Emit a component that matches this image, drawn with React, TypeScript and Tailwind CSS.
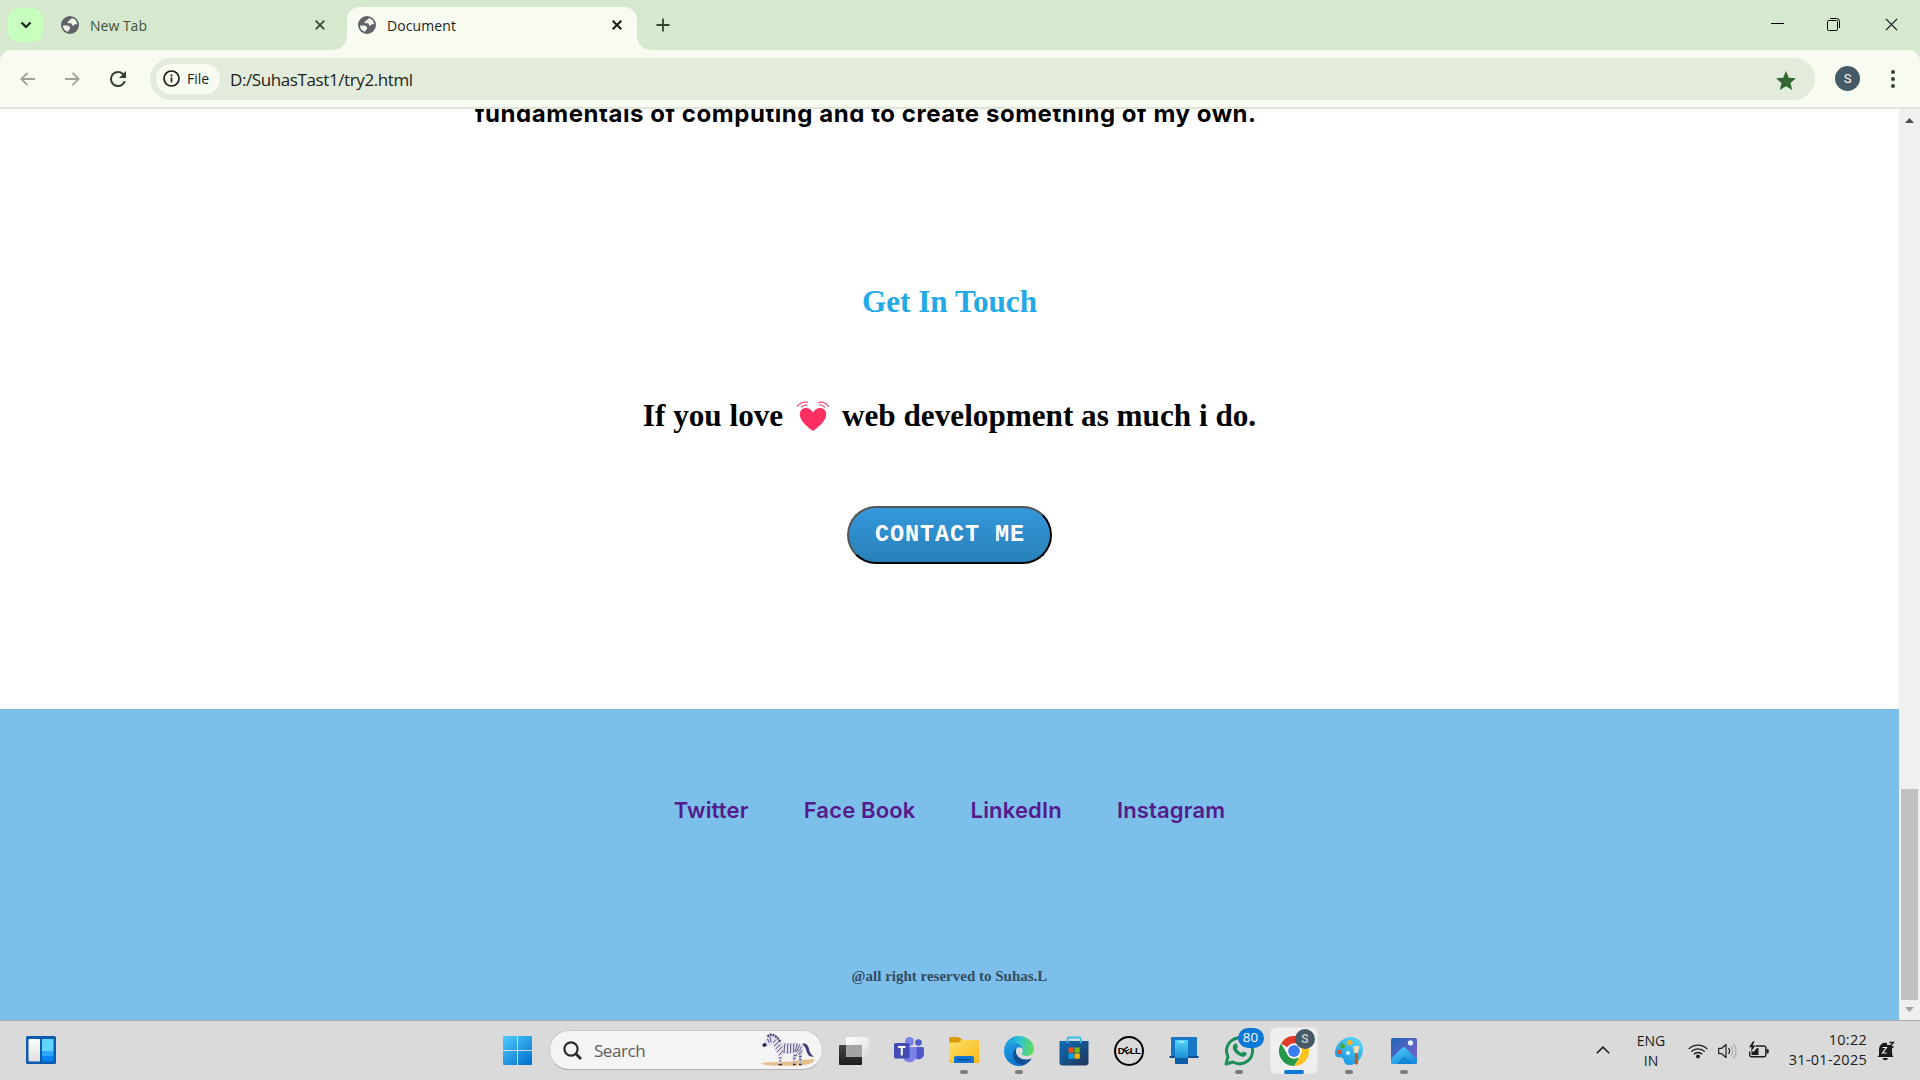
import type { ReactNode } from "react";

const ui = "font-['Open_Sans','Noto_Sans',sans-serif]";

function Globe() {
  return (
    <svg width="18" height="18" viewBox="0 0 18 18" className="shrink-0">
      <circle cx="9" cy="9" r="9" fill="#5f6368" />
      <path
        d="M10.5 2c.1 1-.6 1.7-1.6 1.8-.8.1-.8 1.5-1.5 1.700-.8.200-1.100.500-1 1.100.1.700.700.700 1.300.700h1.700c1.100 0 1.500.600 1.500 1.300.1.900.400 1.100 1.100 1.100 1 0 .900-.800 1.500-1.200.700-.400 1.700-.200 2.700-.300a7.300 7.300 0 0 0-5.700-6.200Z"
        fill="#eff4e9"
      />
      <path d="M1.900 9.500c2.200-.1 4-.1 5.300.3 1.600.5 1.900 1.600 1.900 2.600 0 .9-.5 1.200-1.200 1.500-.7.300-.4 1.500-.6 2A7.200 7.200 0 0 1 1.900 9.500Z" fill="#eff4e9" />
    </svg>
  );
}

function Cross({ color, size = 10, w = 1.8 }: { color: string; size?: number; w?: number }) {
  return (
    <svg width={size} height={size} viewBox="0 0 10 10" className="shrink-0">
      <path d="M.7.7l8.600 8.600M9.300.7L.7 9.300" stroke={color} strokeWidth={w} fill="none" />
    </svg>
  );
}

function TabStrip() {
  return (
    <div className="flex h-[50px] shrink-0 items-start bg-[#d6e8cd]">
      <div className="ml-2 mt-2 flex h-[34px] w-[35px] items-center justify-center rounded-[11px] bg-[#c7ffbf]">
        <svg width="12" height="8" viewBox="0 0 12 8" fill="none">
          <path d="M1.500 1.500 6 6l4.500-4.500" stroke="#10200f" strokeWidth="2.200" />
        </svg>
      </div>
      <div className="ml-[18px] flex h-[50px] w-[264px] items-center">
        <Globe />
        <span className="ml-[11px] text-[14px] text-[#43513f]">New Tab</span>
        <span className="ml-auto">
          <Cross color="#3b4a38" />
        </span>
      </div>
      <svg width="22" height="50" viewBox="0 0 22 50" className="shrink-0">
        <path d="M8 50A14 14 0 0 0 22 36V50Z" fill="#f8fbf2" />
      </svg>
      <div className="mt-[7px] flex h-[43px] w-[290px] items-center rounded-t-[13px] bg-[#f8fbf2] pb-[7px] pl-[11px] pr-[15px]">
        <Globe />
        <span className="ml-[11px] text-[14px] tracking-[0.1px] text-[#1b1f19]">Document</span>
        <span className="ml-auto">
          <Cross color="#161c14" w={2} />
        </span>
      </div>
      <svg width="14" height="50" viewBox="0 0 14 50" className="shrink-0">
        <path d="M14 50A14 14 0 0 1 0 36V50Z" fill="#f8fbf2" />
      </svg>
      <svg width="14" height="14" viewBox="0 0 14 14" className="ml-[5px] mt-[18px] shrink-0">
        <path d="M7 .5v13M.5 7h13" stroke="#36452f" strokeWidth="1.800" />
      </svg>
      <div className="ml-auto mr-[22px] mt-[18px] flex">
        <svg width="13" height="13" viewBox="0 0 13 13" className="mr-[43px]">
          <path d="M0 5.500h13" stroke="#000" />
        </svg>
        <svg width="13" height="13" viewBox="0 0 13 13" className="mr-[45px]" fill="none" stroke="#000">
          <rect x=".5" y="2.500" width="10" height="10" rx="1" />
          <path d="M3 .5h6.500a3 3 0 0 1 3 3V10" />
        </svg>
        <Cross color="#111" size={13} w={0.9} />
      </div>
    </div>
  );
}

function Toolbar() {
  return (
    <div className="h-[59px] shrink-0 bg-[#d6e8cd]">
      <div className="flex h-[59px] items-center rounded-t-[11px] border-b-2 border-[#dfe6d8] bg-[#f8fbf2] pl-[20px]">
        <svg width="15" height="14" viewBox="0 0 15 14" fill="none" stroke="#9da39a" strokeWidth="1.800">
          <path d="M15 7H1.500M7.500.8 1.300 7l6.200 6.200" />
        </svg>
        <svg width="15" height="14" viewBox="0 0 15 14" fill="none" stroke="#9da39a" strokeWidth="1.800" className="ml-[30px]">
          <path d="M0 7h13.500M7.500.8 13.700 7l-6.200 6.200" />
        </svg>
        <svg width="16" height="16" viewBox="4 4 16 16" className="ml-[30px]" fill="#33432f">
          <path d="M17.650 6.350A7.960 7.960 0 0 0 12 4a8 8 0 1 0 7.730 10h-2.080A6 6 0 1 1 12 6c1.660 0 3.140.69 4.220 1.780L13 11h7V4z" />
        </svg>
        <div className="ml-[24px] flex h-[42px] w-[1665px] items-center rounded-full bg-[#e3ebdc] pl-[6px] pr-[19px]">
          <div className="flex h-[30px] w-[64px] items-center rounded-full bg-[#f8fbf2] pl-[7px]">
            <svg width="17" height="17" viewBox="0 0 17 17" fill="none" stroke="#1b2118" strokeWidth="1.700">
              <circle cx="8.500" cy="8.500" r="7.500" />
              <path d="M8.500 7.600v4.600M8.500 4.600v1.800" />
            </svg>
            <span className="ml-[7px] text-[14px] font-medium text-[#1b1f19]">File</span>
          </div>
          <span className="ml-[10px] mt-[2px] text-[17px] leading-[24px] tracking-[-0.4px] text-[#1b1f19]">D:/SuhasTast1/try2.html</span>
          <svg width="20" height="19" viewBox="2 2 20 19" className="ml-auto mt-[3px]" fill="#32682f">
            <path d="M12 17.270 18.180 21l-1.640-7.030L22 9.240l-7.190-.61L12 2 9.190 8.630 2 9.240l5.460 4.730L5.820 21z" />
          </svg>
        </div>
        <div className="ml-[20px] flex size-[25px] items-center justify-center rounded-full bg-[#455a64] font-['Roboto',sans-serif] text-[13px] text-white">S</div>
        <div className="ml-[31px] flex flex-col gap-[3px]">
          <i className="size-1 rounded-full bg-[#33432f]" />
          <i className="size-1 rounded-full bg-[#33432f]" />
          <i className="size-1 rounded-full bg-[#33432f]" />
        </div>
      </div>
    </div>
  );
}

function BeatingHeart() {
  return (
    <svg width="34" height="32" viewBox="0 0 34 32" className="ml-[5px] mr-[12px] mt-px" fill="none">
      <path d="M17 30C13 27 3.800 20.500 3.800 13.500c0-4 2.700-6.500 6.100-6.500 3.100 0 5.600 1.800 7.100 4.600C18.500 8.800 21 7 24.100 7c3.400 0 6.100 2.500 6.100 6.500 0 7-9.200 13.500-13.200 16.500Z" fill="#ff2f62" />
      <g stroke="#f4527a" strokeWidth="1.200" strokeLinecap="round">
        <path d="M1.500 5.500C3.500 2.300 7 .6 11.500 1.300M5.500 6.200c1.500-1.900 3.500-2.500 5.200-2.300" />
        <path d="M32.500 5.500C30.500 2.300 27 .6 22.500 1.300M28.500 6.200c-1.500-1.900-3.500-2.500-5.200-2.300" />
      </g>
    </svg>
  );
}

function Page() {
  return (
    <main className="flex h-[911px] w-[1899px] flex-col overflow-hidden bg-white">
      <p className="-mt-[11px] ml-[475px] h-8 shrink-0 whitespace-nowrap font-['Inter',sans-serif] text-[24px] font-bold leading-8 tracking-[0.55px] text-black">
        fundamentals of computing and to create something of my own.
      </p>
      <h2 className="mt-[152px] text-center font-['Liberation_Serif',serif] text-[31.2px] font-bold leading-10 text-[#23a9e6]">Get In Touch</h2>
      <div className="mt-[74px] flex h-10 items-center justify-center whitespace-pre font-['Liberation_Serif',serif] text-[31.2px] font-bold leading-10 text-black">
        <span>If you love </span>
        <BeatingHeart />
        <span>web development as much i do.</span>
      </div>
      <button className="mt-[70px] h-[58px] w-[205px] shrink-0 self-center rounded-[30px] border-2 border-b-black border-l-[#555] border-r-black border-t-[#555] bg-linear-to-b from-[#3498db] to-[#2980b9] pl-px font-['Courier_New','Liberation_Mono',monospace] text-[23.500px] font-bold leading-[54px] tracking-[0.9px] text-white">
        CONTACT ME
      </button>
      <footer className="mt-[145px] flex h-[311px] shrink-0 flex-col items-center bg-[#7dbfeb] pt-[86px]">
        <nav className="flex gap-[55px] font-['Inter',sans-serif] text-[22px] font-semibold leading-[30px] tracking-[0.17px] text-[#551a8b]">
          <a>Twitter</a>
          <a>Face Book</a>
          <a>LinkedIn</a>
          <a>Instagram</a>
        </nav>
        <p className="mt-[141px] font-['Liberation_Serif',serif] text-[15px] font-bold leading-5 text-[#324c5e]">@all right reserved to Suhas.L</p>
      </footer>
    </main>
  );
}

function Scrollbar() {
  return (
    <div className="flex w-[21px] flex-col items-center bg-[#f0f0f0]">
      <svg width="9" height="5" viewBox="0 0 9 5" className="mr-px mt-[9px] shrink-0">
        <path d="M4.500 0 9 5H0z" fill="#505050" />
      </svg>
      <div className="mt-[666px] h-[211px] w-[17px] bg-[#c1c1c1]" />
      <svg width="9" height="5" viewBox="0 0 9 5" className="mr-px mt-[7px] shrink-0">
        <path d="M0 0h9L4.500 5z" fill="#a3a3a3" />
      </svg>
    </div>
  );
}

function Zebra() {
  return (
    <svg width="56" height="34" viewBox="0 0 56 34" className="ml-auto">
      <path d="M0 30.500c4-2 24-1 34-2.500 7-1 14-2 20-1.500-2 4-8 5.500-14 5.800-13 .8-35 1-40-1.800Z" fill="#e6bf8c" />
      <path d="M33 18l-1.500 6 .8 7.500h2L34.500 25l3-4 .5 10.500h2.200L41 22l1-5Z" fill="#c3bccd" />
      <path d="M1.500 11.500c.5-2.500 3-4 4-6.500C7 3.500 8 2 10.500 2.500 14 3 16 6.500 19.500 9.500c5 1.500 10-.5 16 0 5 .5 7 3 6.500 7-.5 3.500-3 4-6 4-4 1-8 1-11.500.5L21 23l-.3 8.500h-3L17.500 24C15 20 14 15 11.500 10.500c-2 1-4 3-5.500 3.300-2 .8-4.500.2-4.500-2.300Z" fill="#e4dfea" />
      <path d="M6.500 3.500C9.500 0 15 1.500 19.500 9" stroke="#43386a" strokeWidth="2.200" strokeDasharray="2 .8" fill="none" />
      <path d="M6.500 5.500l1.500 4M9 3.500l1 6M12 10l3-3.500M13 13l4.500-4M14.500 16l5-4.500M16 19l5.500-5.500M18 22.500l4-5M24 10.500c-1 3-.5 6-1 9.500M27 10.500c-.8 3-.2 6-.5 10M30 10.500c-.8 3 0 6-.5 9.500M33 10.500c-.8 3 0 5-.5 9M36 10.500c0 3-1 5-2 8M38.500 11.500c-.5 3-2 5-3.500 7.500M40.500 13.500c-1 3-2.500 4-4 6M41 17l-3 4M33 22.500h2.500M32.500 25.500h2M38 23.500h2.500M38.200 26.500h2M17.800 25h3M18 28h2.500" stroke="#53497a" strokeWidth=".95" fill="none" />
      <path d="M41 11c4-1.500 6 1.500 7 5 .8 3.500 2 6 5 7.500-4 1-6.500-1.500-7.500-5.500-.7-3.500-2-5-4.500-7Z" fill="#453970" />
      <path d="M1.500 11.500 4 9.800l2 2.200-2 1.800c-1.700.3-2.800-.8-2.500-2.300Z" fill="#2c2548" />
      <path d="M17.500 31.500h3.500M32 31.500h2.500M38 31.500h2.500" stroke="#2c2548" strokeWidth="1.500" />
    </svg>
  );
}

function TaskbarApp({ children, dot, active }: { children: ReactNode; dot?: boolean; active?: boolean }) {
  return (
    <div className="relative flex h-full w-[55px] items-center justify-center">
      {active && <div className="absolute inset-x-[3.500px] bottom-[6px] top-[6px] rounded-md border border-[#e6e6e6] bg-[#efefef]" />}
      <div className="relative flex items-center justify-center">{children}</div>
      {dot && <div className="absolute bottom-[6px] h-1 w-2 rounded-full bg-[#7b7b7b]" />}
      {active && <div className="absolute bottom-[6px] h-1 w-5 rounded-full bg-[#0a78d7]" />}
    </div>
  );
}

function Taskbar() {
  return (
    <div className="flex h-[60px] shrink-0 items-start border-t border-[#a9a9a9] bg-[#dadada]">
      <svg width="30" height="28" viewBox="0 0 30 28" className="ml-[26px] mt-[15px]">
        <defs>
          <linearGradient id="wp" x1="0" y1="0" x2="0" y2="1">
            <stop stopColor="#fff" />
            <stop offset="1" stopColor="#dedede" />
          </linearGradient>
        </defs>
        <rect width="30" height="28" rx="1.500" fill="#0d5cae" />
        <rect x="2.500" y="3" width="11.500" height="22.500" rx="1" fill="url(#wp)" />
        <rect x="16" y="3" width="11.500" height="12" fill="#5fd4ff" />
        <rect x="16" y="15" width="11.500" height="5" fill="#2aa8fb" />
        <rect x="16" y="20" width="11.500" height="5.500" fill="#0a84ee" />
      </svg>
      <svg width="29" height="29" viewBox="0 0 29 29" className="ml-[447px] mt-[15px]">
        <defs>
          <linearGradient id="win" gradientUnits="userSpaceOnUse" x1="2" y1="0" x2="26" y2="29">
            <stop stopColor="#4ccbfb" />
            <stop offset="1" stopColor="#0470cd" />
          </linearGradient>
        </defs>
        <path d="M1 0h13v14H0V1a1 1 0 0 1 1-1ZM15 0h13a1 1 0 0 1 1 1v13H15ZM0 15h14v14H1a1 1 0 0 1-1-1ZM15 15h14v13a1 1 0 0 1-1 1H15Z" fill="url(#win)" />
      </svg>
      <div className="ml-[17px] mt-[9px] flex h-[40px] w-[274px] items-center rounded-full border border-[#c9c9c9] border-b-[#b2b2b2] bg-[#f4f4f4] pl-[13px] pr-[5px]">
        <svg width="19" height="19" viewBox="0 0 19 19" fill="none" stroke="#2b2b2b" strokeWidth="2.200">
          <circle cx="8" cy="8" r="6.600" />
          <path d="m12.800 12.800 5.200 5.200" strokeWidth="2.800" />
        </svg>
        <span className="ml-[12px] mt-px text-[17px] leading-[24px] tracking-[-0.45px] text-[#5c5c5c]">Search</span>
        <Zebra />
      </div>
      <div className="ml-[3.500px] flex h-[59px]">
        <TaskbarApp>
          <svg width="30" height="28" viewBox="0 0 30 28">
            <defs>
              <linearGradient id="tv" x1="0" y1="0" x2="0" y2="1">
                <stop stopColor="#454545" />
                <stop offset="1" stopColor="#1c1c1c" />
              </linearGradient>
              <linearGradient id="tvb" x1="0" y1="0" x2="1" y2="1">
                <stop stopColor="#fff" />
                <stop offset="1" stopColor="#dcdcdc" />
              </linearGradient>
            </defs>
            <rect y="8" width="23" height="20" rx="1" fill="url(#tv)" />
            <rect x="7" width="23" height="20" rx="1" fill="url(#tvb)" />
            <path d="M7 8h16v12H7z" fill="#a5a5a5" />
          </svg>
        </TaskbarApp>
        <TaskbarApp>
          <svg width="30" height="27" viewBox="0 0 30 27">
            <circle cx="24.500" cy="5.500" r="3.300" fill="#5059c9" />
            <path d="M19 10h9.500A1.500 1.500 0 0 1 30 11.500V17a5.500 5.500 0 0 1-9 4Z" fill="#5059c9" />
            <circle cx="15.500" cy="4.500" r="4.500" fill="#7b83eb" />
            <path d="M9 10h13.500v9.500a7 7 0 0 1-13.500 1Z" fill="#7b83eb" />
            <rect y="6" width="15.500" height="15.500" rx="1.500" fill="#444bb3" />
            <path d="M4 10h7.500M7.750 10v8.500" stroke="#fff" strokeWidth="2" />
          </svg>
        </TaskbarApp>
        <TaskbarApp dot>
          <svg width="30" height="27" viewBox="0 0 30 27">
            <defs>
              <linearGradient id="fo" x1="0" y1="0" x2="1" y2="1">
                <stop stopColor="#ffdf6b" />
                <stop offset="1" stopColor="#f8b916" />
              </linearGradient>
            </defs>
            <path d="M0 1.500Q0 0 1.500 0H9q1.500 0 2.500 1.500L13.500 3v6H0Z" fill="#dc9a06" />
            <path d="M0 5.500h9.500l3-2.500H29a1 1 0 0 1 1 1v22H0Z" fill="url(#fo)" />
            <path d="M5 26v-5a2 2 0 0 1 2-2h16a2 2 0 0 1 2 2v5Z" fill="#0f74d0" />
            <path d="M8.500 22.800h13" stroke="#0a458c" strokeWidth="1.200" />
          </svg>
        </TaskbarApp>
        <TaskbarApp dot>
          <svg width="30" height="30" viewBox="0 0 30 30">
            <defs>
              <linearGradient id="e1" x1="0" y1=".3" x2="1" y2=".4">
                <stop stopColor="#1794e0" />
                <stop offset=".5" stopColor="#30c2d4" />
                <stop offset="1" stopColor="#63de58" />
              </linearGradient>
              <linearGradient id="e2" x1="0" y1="0" x2=".5" y2="1">
                <stop stopColor="#25a2e2" />
                <stop offset="1" stopColor="#0872d2" />
              </linearGradient>
            </defs>
            <path d="M.3 12.500C1.500 5 7.500 0 15 0c8 0 15 5.500 15 13 0 4.500-3.300 7-7.300 7-3 0-5-1.200-5-2.300 0-.9 1.200-1.300 1.200-3.500 0-3-2.700-5.200-6.500-5.200C7.500 9 3 10 .3 12.500Z" fill="url(#e1)" />
            <path d="M0 15C0 9.500 4.500 7 9.500 7c5.500 0 9.400 3.500 9.400 7.200 0-2-2-3-3.500-3-3 0-5.200 3.500-5.200 7 0 6 4 10.800 8.800 11.200C17.800 29.800 16.500 30 15 30 6.700 30 0 23.300 0 15Z" fill="url(#e2)" />
            <path d="M12.500 12.500C9.500 14 8.500 17 9 20c.7 5 5 9 10 9.400 4-1.200 7-4 8.800-7.200-1.800.9-3.800 1.300-5.800 1.300-5.500 0-9.700-3.500-10-7.500 0-1.500 0-2.500.5-3.500Z" fill="#124f96" />
          </svg>
        </TaskbarApp>
        <TaskbarApp>
          <svg width="30" height="30" viewBox="0 0 30 30" className="-ml-px">
            <defs>
              <linearGradient id="st" x1="0" y1="0" x2="1" y2="1">
                <stop stopColor="#0d6db9" />
                <stop offset="1" stopColor="#213459" />
              </linearGradient>
            </defs>
            <path d="M8.500 7V2.500a1 1 0 0 1 1-1h11a1 1 0 0 1 1 1V7" fill="none" stroke="#31bff0" strokeWidth="1.800" />
            <path d="M.5 5h29v21.500a3 3 0 0 1-3 3h-23a3 3 0 0 1-3-3Z" fill="url(#st)" />
            <path d="M9.500 11.500h5.200v5.200H9.500z" fill="#f25022" />
            <path d="M15.500 11.500h5.200v5.200h-5.200z" fill="#7fba00" />
            <path d="M9.500 17.500h5.200v5.200H9.500z" fill="#00a4ef" />
            <path d="M15.500 17.500h5.200v5.200h-5.200z" fill="#ffb900" />
            <path d="M8.500 5v2M21.500 5v2" stroke="#31bff0" strokeWidth="1.800" />
          </svg>
        </TaskbarApp>
        <TaskbarApp>
          <div className="flex size-[30px] items-center justify-center rounded-full border-2 border-black font-['Liberation_Sans',sans-serif] text-[9.500px] font-bold leading-none tracking-[-0.6px] text-black">
            <span>D</span>
            <span className="-rotate-[35deg]">E</span>
            <span>LL</span>
          </div>
        </TaskbarApp>
        <TaskbarApp>
          <svg width="30" height="27" viewBox="0 0 30 27">
            <defs>
              <linearGradient id="ph" x1="0" y1="0" x2="0" y2="1">
                <stop stopColor="#55d6fb" />
                <stop offset="1" stopColor="#0c78c8" />
              </linearGradient>
            </defs>
            <rect x="2" y="0" width="26" height="20" rx="1" fill="#1678c4" />
            <path d="M0 19h30l-1 2H1z" fill="#0c4d8f" />
            <rect x="6" y="3" width="13" height="24" rx="1" fill="url(#ph)" />
            <path d="M10 5h5" stroke="#e8faff" strokeWidth="1" />
            <path d="M6 21h13v5a1 1 0 0 1-1 1H7a1 1 0 0 1-1-1z" fill="#0b5ba5" />
          </svg>
        </TaskbarApp>
        <TaskbarApp dot>
          <svg width="31" height="31" viewBox="0 0 31 31" fill="none">
            <path d="M2 29l2-7.300A13 13 0 1 1 9 27Z" stroke="#1d8f59" strokeWidth="3" strokeLinejoin="round" />
            <path d="M10.800 8.500c.8-.5 1.700-.3 2 .5l1 2.400c.3.700-.9 1.700-1 2.200.9 2 2.500 3.500 4.700 4.400.6-.2 1.500-1.700 2.200-1.400l2.500 1.200c.8.500.5 1.900-.2 2.600-1.500 1.600-3.700 1.700-6 .7-3.200-1.400-5.500-3.500-6.800-6.500-.9-2.400-.4-4.700 1.600-6.100Z" fill="#1d8f59" />
          </svg>
          <span className="absolute -right-[9px] -top-[7px] flex h-[20px] w-[26px] items-center justify-center rounded-full bg-[#0a78d7] text-[13.500px] leading-none text-white">80</span>
        </TaskbarApp>
        <TaskbarApp active>
          <svg width="30" height="30" viewBox="0 0 30 30">
            <path d="M2 7.500A15 15 0 0 1 28 7.500H15a7.500 7.500 0 0 0-6.500 3.800Z" fill="#e33b2e" />
            <path d="M28 7.500A15 15 0 0 1 15 30l6.500-11.200A7.500 7.500 0 0 0 21 9.500L15 7.500Z" fill="#fcc31e" />
            <path d="M15 30A15 15 0 0 1 2 7.500l6.500 11.200A7.500 7.500 0 0 0 17 22.200l3-.5Z" fill="#279847" />
            <circle cx="15" cy="15" r="7.400" fill="#fff" />
            <circle cx="15" cy="15" r="5.900" fill="#3b7ded" />
          </svg>
          <span className="absolute -right-[6px] -top-[7px] flex size-[20px] items-center justify-center rounded-full bg-[#455a64] font-['Roboto',sans-serif] text-[12px] font-medium leading-none text-[#c9d0d3]">S</span>
        </TaskbarApp>
        <TaskbarApp dot>
          <svg width="30" height="30" viewBox="0 0 30 30">
            <defs>
              <linearGradient id="pa" x1=".7" y1="0" x2=".2" y2="1">
                <stop stopColor="#58d4f7" />
                <stop offset="1" stopColor="#1490df" />
              </linearGradient>
            </defs>
            <path d="M17 1C8 1 1 9 1 17.500c0 2.500 1.500 4 4 3.800 3-.2 4.500.7 4.700 3 .2 3 2.300 4.700 5.800 4.700C23 29 29 21 29 13.500S24 1 17 1Z" fill="url(#pa)" />
            <circle cx="16" cy="6.500" r="2.600" fill="#ffb81c" />
            <circle cx="8.500" cy="10" r="2.500" fill="#43a83b" />
            <circle cx="5.500" cy="16" r="2.400" fill="#e4512b" />
            <circle cx="14" cy="17" r="2" fill="#dff4fc" />
            <path d="M19 9.500l1.500 1 1-1 1.500 1 1-1 1.500 1-1 4.500-.5 2h-3.500l-.5-2Z" fill="#f3dcb6" />
            <path d="M21 17h2.800l.4 9c0 3.500-3.500 3.500-3.500 0Z" fill="#ad622a" />
          </svg>
        </TaskbarApp>
        <TaskbarApp dot>
          <svg width="26" height="26" viewBox="0 0 26 26">
            <defs>
              <linearGradient id="pt" x1="0" y1="0" x2="1" y2="1">
                <stop stopColor="#2065b8" />
                <stop offset="1" stopColor="#8562cc" />
              </linearGradient>
              <linearGradient id="pm" x1="0" y1="0" x2=".6" y2="1">
                <stop stopColor="#59d3fb" />
                <stop offset="1" stopColor="#148bdd" />
              </linearGradient>
              <clipPath id="pc">
                <rect width="26" height="26" rx="2" />
              </clipPath>
            </defs>
            <g clipPath="url(#pc)">
              <rect width="26" height="26" fill="url(#pt)" />
              <path d="M-1 22 11 10q1.800-1.800 3.600 0L27 22.500V27H-1Z" fill="url(#pm)" />
              <path d="M5 27l8-8.500L24 27Z" fill="#1286d6" />
              <circle cx="19.500" cy="4.800" r="2.600" fill="#eaf7ff" />
            </g>
          </svg>
        </TaskbarApp>
      </div>
      <div className="ml-auto flex h-[59px] items-center pr-[25px] text-[14.500px] leading-5 text-[#1c1c1c]">
        <svg width="14" height="8" viewBox="0 0 14 8" className="mb-px" fill="none">
          <path d="m.8 7.200 6.200-6 6.200 6" stroke="#1c1c1c" strokeWidth="1.600" />
        </svg>
        <div className="ml-[25px] w-[32px] text-center text-[14px]">
          <div>ENG</div>
          <div>IN</div>
        </div>
        <svg width="20" height="16" viewBox="0 0 20 16" className="ml-[21px]" fill="none" stroke="#1c1c1c" strokeWidth="1.300">
          <path d="M.7 6a13.200 13.200 0 0 1 18.600 0M3.200 8.600a9.600 9.600 0 0 1 13.600 0M5.800 11.200a6 6 0 0 1 8.400 0" />
          <circle cx="10" cy="13.500" r="1.900" fill="#1c1c1c" stroke="none" />
        </svg>
        <svg width="21" height="16" viewBox="0 0 21 16" className="ml-[10px]" fill="none" stroke="#1c1c1c" strokeWidth="1.200">
          <path d="M.7 5.300h3L8 1.500v13l-4.300-3.800h-3Z" strokeLinejoin="round" />
          <path d="M10.500 5.200a4.500 4.500 0 0 1 0 5.600" />
          <path d="M13 3.300a7.500 7.500 0 0 1 0 9.400M15.500 1a11 11 0 0 1 0 14" stroke="#aaa" />
        </svg>
        <svg width="21" height="18" viewBox="0 0 21 18" className="mb-[2px] ml-[9px]" fill="none">
          <path d="M7.500 5H16a1.800 1.800 0 0 1 1.800 1.800V14a1.800 1.800 0 0 1-1.800 1.800H3.500A1.800 1.800 0 0 1 1.700 14v-3.500" stroke="#1c1c1c" strokeWidth="1.400" />
          <path d="M18.500 8h1.200q1 0 1 1v2.500q0 1-1 1h-1.200Z" fill="#1c1c1c" />
          <path d="M9 7h1.500v7H3.500v-3.500H6Z" fill="#1c1c1c" />
          <path d="M5 .2 1 6.300h2.700L2.800 11 7.500 4.500H4.700L6.500.2Z" fill="#1c1c1c" />
        </svg>
        <div className="-mt-[2px] ml-[18px] w-[80px] text-right tracking-[0.25px]">
          <div>10:22</div>
          <div>31-01-2025</div>
        </div>
        <svg width="18" height="20" viewBox="0 0 18 20" className="ml-[10px]">
          <path d="M2 14V8a6.200 6.200 0 0 1 8-6v2h5v6l.2 4 1.300 2H.5Z" fill="#1c1c1c" />
          <path d="M5.500 17h5.500a2.800 2.800 0 0 1-5.500 0Z" fill="#1c1c1c" />
          <path d="M5.500 6.500h4l-4 5.500h4.200" stroke="#eee" strokeWidth="1.200" fill="none" />
          <path d="M12.500 1.500h4l-4 4.500h4.200" stroke="#1c1c1c" strokeWidth="1.300" fill="none" />
        </svg>
      </div>
    </div>
  );
}

export default function App() {
  return (
    <div className={`flex h-[1080px] w-[1920px] flex-col overflow-hidden ${ui}`}>
      <TabStrip />
      <Toolbar />
      <div className="flex h-[911px] shrink-0">
        <Page />
        <Scrollbar />
      </div>
      <Taskbar />
    </div>
  );
}
